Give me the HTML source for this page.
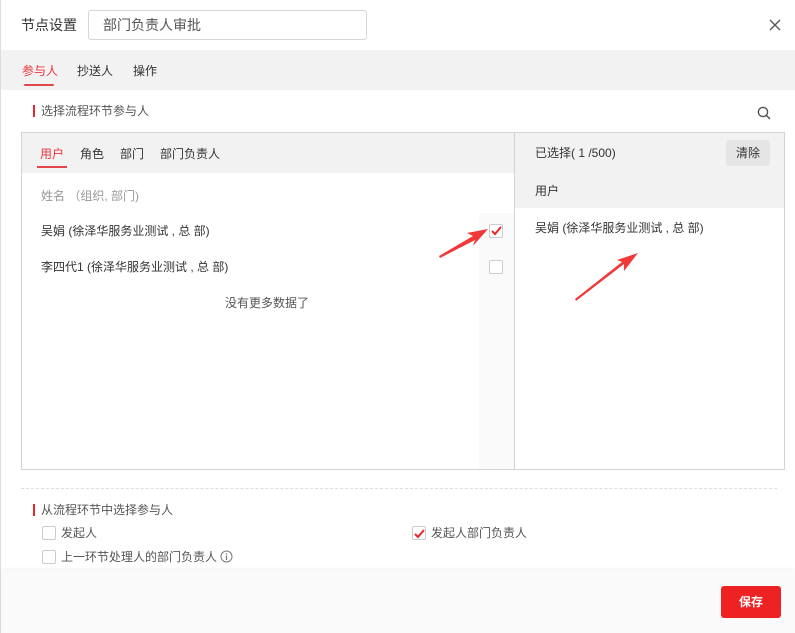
<!DOCTYPE html>
<html><head><meta charset="utf-8"><style>
*{margin:0;padding:0;box-sizing:border-box}
body{width:795px;height:633px;background:#fff;font-family:"Liberation Sans","Noto Sans CJK SC",sans-serif;font-size:12px;color:#333;position:relative;overflow:hidden}
.a{position:absolute;white-space:nowrap;line-height:16px}
.cb{position:absolute;width:14px;height:14px;border:1px solid #ccc;border-radius:2px;background:#fff}
</style></head><body>
<div class="a" style="left:0;top:0;width:1px;height:633px;background:#ddd"></div>
<div class="a" style="left:21px;top:17px;font-size:14px">节点设置</div>
<div class="a" style="left:88px;top:10px;width:279px;height:30px;border:1px solid #d6d6d6;border-radius:3px;padding:6px 14px;font-size:14px;color:#555">部门负责人审批</div>
<svg class="a" style="left:769px;top:19px" width="12" height="12"><path d="M1 1L11 11M11 1L1 11" stroke="#555" stroke-width="1.3"/></svg>
<div class="a" style="left:1px;top:50px;width:794px;height:40px;background:#f2f2f2"></div>
<div class="a" style="left:22px;top:63px;color:#e8363c">参与人</div>
<div class="a" style="left:24px;top:84px;width:30px;height:2px;background:#e0464b;border-radius:1px"></div>
<div class="a" style="left:77px;top:63px">抄送人</div>
<div class="a" style="left:133px;top:63px">操作</div>
<div class="a" style="left:33px;top:105px;width:2px;height:12px;background:#e8262c"></div>
<div class="a" style="left:41px;top:103px;color:#555">选择流程环节参与人</div>
<svg class="a" style="left:757px;top:106px" width="14" height="14"><circle cx="6" cy="6" r="4.6" fill="none" stroke="#555" stroke-width="1.4"/><path d="M9.3 9.3L13 13" stroke="#555" stroke-width="1.5"/></svg>
<div class="a" style="left:21px;top:132px;width:764px;height:338px;border:1px solid #d3d3d3"></div>
<div class="a" style="left:22px;top:133px;width:492px;height:40px;background:#f2f2f2"></div>
<div class="a" style="left:514px;top:133px;width:1px;height:336px;background:#d3d3d3"></div>
<div class="a" style="left:515px;top:133px;width:269px;height:75px;background:#f2f2f2"></div>
<div class="a" style="left:40px;top:146px;color:#e8363c">用户</div>
<div class="a" style="left:37px;top:166px;width:30px;height:2px;background:#e0464b"></div>
<div class="a" style="left:80px;top:146px">角色</div>
<div class="a" style="left:120px;top:146px">部门</div>
<div class="a" style="left:160px;top:146px">部门负责人</div>
<div class="a" style="left:479px;top:213px;width:35px;height:256px;background:#fafafa"></div>
<div class="a" style="left:41px;top:188px;color:#999">姓名 （组织, 部门)</div>
<div class="a" style="left:41px;top:223px">吴娟 (徐泽华服务业测试 , 总 部)</div>
<div class="a" style="left:41px;top:259px">李四代1 (徐泽华服务业测试 , 总 部)</div>
<div class="cb" style="left:489px;top:224px"></div>
<svg class="a" style="left:491px;top:226px" width="11" height="10"><path d="M1 5L4 8L10 1" fill="none" stroke="#e8262c" stroke-width="2"/></svg>
<div class="cb" style="left:489px;top:260px"></div>
<div class="a" style="left:225px;top:295px;color:#555">没有更多数据了</div>
<div class="a" style="left:535px;top:145px">已选择( 1 /500)</div>
<div class="a" style="left:726px;top:140px;width:44px;height:26px;background:#e5e5e5;border-radius:3px;text-align:center;line-height:26px">清除</div>
<div class="a" style="left:535px;top:183px">用户</div>
<div class="a" style="left:535px;top:220px">吴娟 (徐泽华服务业测试 , 总 部)</div>
<svg class="a" style="left:0;top:0" width="795" height="633"><path d="M440 258L475 240L473 246L488 229L467 233L473 236L439 256Z" fill="#f03a3a"/><path d="M576 301L624 264L624 271L638 253L617 260L622 262L575 299Z" fill="#f03a3a"/></svg>
<div class="a" style="left:21px;top:488px;width:756px;border-top:1px dashed #ddd"></div>
<div class="a" style="left:33px;top:504px;width:2px;height:12px;background:#e8262c"></div>
<div class="a" style="left:41px;top:502px;color:#555">从流程环节中选择参与人</div>
<div class="cb" style="left:42px;top:526px"></div>
<div class="a" style="left:61px;top:525px;color:#555">发起人</div>
<div class="cb" style="left:412px;top:526px"></div>
<svg class="a" style="left:414px;top:529px" width="11" height="10"><path d="M1 5L4 8L10 1" fill="none" stroke="#e8262c" stroke-width="2"/></svg>
<div class="a" style="left:431px;top:525px;color:#555">发起人部门负责人</div>
<div class="cb" style="left:42px;top:550px"></div>
<div class="a" style="left:61px;top:549px;color:#555">上一环节处理人的部门负责人</div>
<svg class="a" style="left:220px;top:550px" width="13" height="13"><circle cx="6.5" cy="6.5" r="5.5" fill="none" stroke="#777"/><path d="M6.5 5.5V10M6.5 3.3V4.5" stroke="#777" stroke-width="1.2"/></svg>
<div class="a" style="left:1px;top:570px;width:794px;height:63px;background:#fafafa;box-shadow:0 -1px 3px rgba(0,0,0,.06)"></div>
<div class="a" style="left:721px;top:586px;width:60px;height:32px;background:#ee2223;border-radius:3px;color:#fff;font-weight:bold;text-align:center;line-height:32px">保存</div>
</body></html>
